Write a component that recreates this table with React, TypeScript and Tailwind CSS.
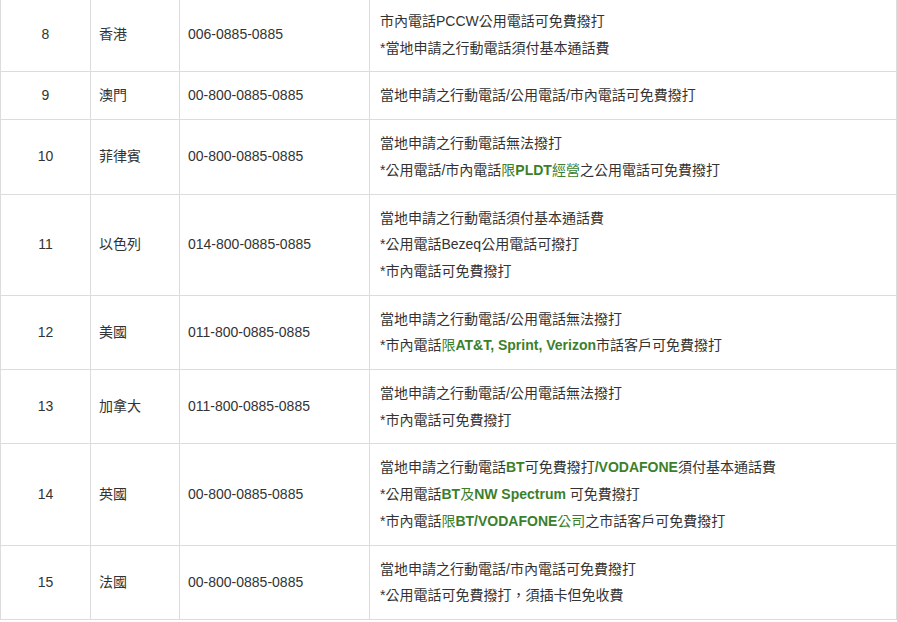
import { ReactNode } from "react";

const G = ({ children }: { children: ReactNode }) => (
    <span className="text-[#3b7f2b]">{children}</span>
);
const GB = ({ children }: { children: ReactNode }) => (
    <span className="text-[#3b7f2b] font-bold">{children}</span>
);

interface Row {
    no: number
    country: string
    phone: string
    notes: ReactNode[]
}

const rows: Row[] = [
    {
        no: 8, country: "香港", phone: "006-0885-0885",
        notes: ["市內電話PCCW公用電話可免費撥打", "*當地申請之行動電話須付基本通話費"],
    },
    {
        no: 9, country: "澳門", phone: "00-800-0885-0885",
        notes: ["當地申請之行動電話/公用電話/市內電話可免費撥打"],
    },
    {
        no: 10, country: "菲律賓", phone: "00-800-0885-0885",
        notes: [
            "當地申請之行動電話無法撥打",
            <>*公用電話/市內電話<G>限</G><GB>PLDT</GB><G>經營</G>之公用電話可免費撥打</>,
        ],
    },
    {
        no: 11, country: "以色列", phone: "014-800-0885-0885",
        notes: ["當地申請之行動電話須付基本通話費", "*公用電話Bezeq公用電話可撥打", "*市內電話可免費撥打"],
    },
    {
        no: 12, country: "美國", phone: "011-800-0885-0885",
        notes: [
            "當地申請之行動電話/公用電話無法撥打",
            <>*市內電話<G>限</G><GB>AT&amp;T, Sprint, Verizon</GB>市話客戶可免費撥打</>,
        ],
    },
    {
        no: 13, country: "加拿大", phone: "011-800-0885-0885",
        notes: ["當地申請之行動電話/公用電話無法撥打", "*市內電話可免費撥打"],
    },
    {
        no: 14, country: "英國", phone: "00-800-0885-0885",
        notes: [
            <>當地申請之行動電話<GB>BT</GB>可免費撥打<GB>/VODAFONE</GB>須付基本通話費</>,
            <>*公用電話<GB>BT</GB><G>及</G><GB>NW Spectrum</GB> 可免費撥打</>,
            <>*市內電話<G>限</G><GB>BT/VODAFONE</GB><G>公司</G>之市話客戶可免費撥打</>,
        ],
    },
    {
        no: 15, country: "法國", phone: "00-800-0885-0885",
        notes: ["當地申請之行動電話/市內電話可免費撥打", "*公用電話可免費撥打，須插卡但免收費"],
    },
];

export default function App() {
    return (
        <div className="w-[897px] h-[622px] overflow-hidden bg-white">
            <table
                className="-mt-[3px] w-[897px] border-collapse text-[14px] text-[#333]"
                style={{ fontFamily: '"Liberation Sans", Arial, "Noto Sans CJK TC", sans-serif' }}
            >
                <colgroup>
                    <col className="w-[90px]" />
                    <col className="w-[89px]" />
                    <col className="w-[190px]" />
                    <col />
                </colgroup>
                <tbody>
                    {rows.map((r) => (
                        <tr key={r.no}>
                            <td className="border border-[#dcdcdc] text-center align-middle py-[10px] leading-[26.7px]">{r.no}</td>
                            <td className="border border-[#dcdcdc] align-middle px-[8px] py-[10px] leading-[26.7px]">{r.country}</td>
                            <td className="border border-[#dcdcdc] align-middle px-[8px] py-[10px] leading-[26.7px]">{r.phone}</td>
                            <td className="border border-[#dcdcdc] align-middle px-[10px] py-[10px] leading-[26.7px]">
                                {r.notes.map((n, i) => (
                                    <div key={i}>{n}</div>
                                ))}
                            </td>
                        </tr>
                    ))}
                </tbody>
            </table>
        </div>
    );
}
